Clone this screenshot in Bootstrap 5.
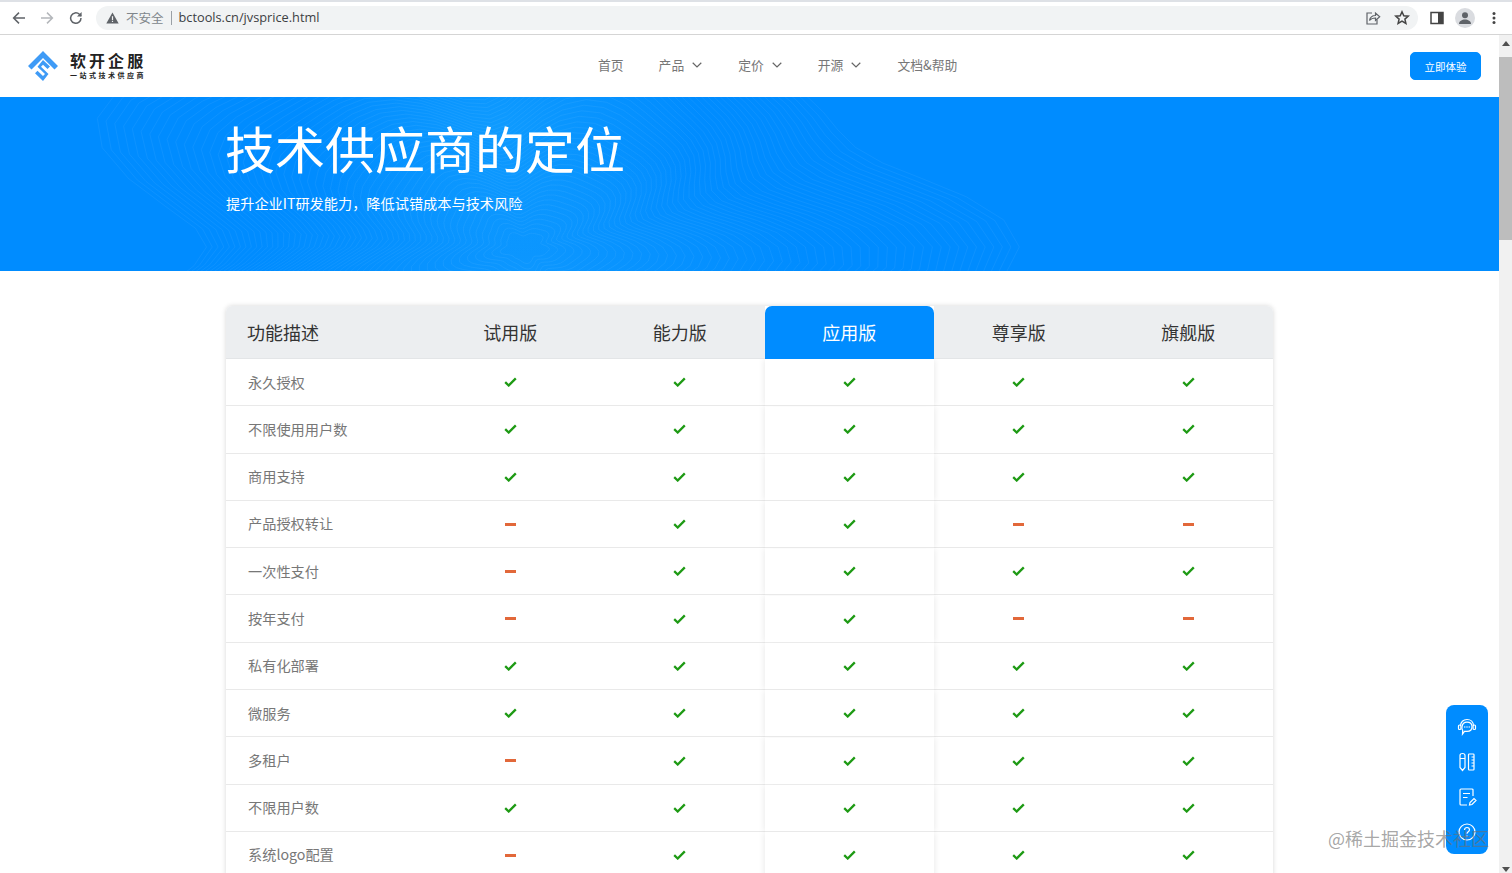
<!DOCTYPE html>
<html lang="zh-CN">
<head>
<meta charset="utf-8">
<title>技术供应商的定位</title>
<link rel="stylesheet" href="https://cdn.jsdelivr.net/npm/bootstrap@5.3.0/dist/css/bootstrap.min.css">
<style>
html,body{height:873px;overflow:hidden;margin:0}
body{font-family:"Noto Sans CJK SC","Noto Sans",sans-serif;background:#fff;color:#333;position:relative}
.tool-bar{height:35px;background:#fff;border-top:2px solid #dee1e6;border-bottom:1px solid #d5d5d5;padding-left:11px}
.tool-ico{width:16px;height:16px;flex:none;color:#5f6368}
.gap-fwd{margin-left:12px}
.gap-reload{margin-left:13px}
.omni{width:1322px;height:24px;margin-left:12px;background:#f1f3f4;border-radius:12px;padding:0 8px 0 10px;font-size:12.5px;flex:none}
.omni-warn{color:#80868b;margin-left:7px}
.omni-sep{width:1px;height:14px;background:#9aa0a6;margin:0 7px}
.omni-url{font-family:"Open Sans",sans-serif;font-size:12.75px;color:#3c4043}
.omni-end{gap:13px}
.side-ico{margin-left:11px}
.avatar{width:20px;height:20px;border-radius:50%;background:#dadce0;margin:0 11px 0 10px;flex:none}
.page-row{height:838px}
.page-main{width:1499px;overflow:hidden;flex:none}
.scroll-track{width:13px;background:#f1f1f1;position:relative}
.scroll-thumb{height:183px;background:#bdbdbd;margin-top:22px}
.arrow-up,.arrow-down{position:absolute;left:3px;width:0;height:0;border-left:4px solid transparent;border-right:4px solid transparent}
.arrow-up{top:6px;border-bottom:5px solid #505050}
.arrow-down{bottom:1px;border-top:5px solid #505050}
.top-nav{height:62px;padding:0 18px 0 28px!important;background:#fff}
.brand-box{width:570px;gap:12px;flex:none}
.brand-text{margin-top:-2px}
.brand-name{font-size:16px;font-weight:700;letter-spacing:3.05px;line-height:19px;color:#222}
.brand-sub{font-size:7px;font-weight:700;letter-spacing:2.5px;line-height:10px;color:#222;white-space:nowrap}
.menu-list{gap:36px;font-size:12.8px;color:#777;margin-top:-2px}
.menu-list span{color:#777}
.menu-first{margin-right:-1px}
.menu-drop{gap:8px}
.try-btn{width:71px;height:28px;padding:0;font-size:10.5px;line-height:28px;border-radius:5px;background:#008cff;border-color:#008cff;color:#fff}
.hero-band{height:174px;padding:11px 0 0 225px;color:#fff;position:relative;overflow:hidden;background:
 radial-gradient(ellipse 200px 130px at 500px 30px,rgba(50,190,255,.30),transparent 100%),
 radial-gradient(ellipse 280px 130px at 530px 175px,rgba(50,185,255,.26),transparent 100%),
 #008cff}
.hero-lines{position:absolute;left:0;top:0;width:1499px;height:174px;pointer-events:none}
.hero-title{font-size:50px;font-weight:400;line-height:78px;margin:0;white-space:nowrap;position:relative}
.hero-sub{font-size:14.2px;line-height:22px;margin:6px 0 0 1px;white-space:nowrap;position:relative}
.price-wrap{padding:35px 0 0 226px}
.price-table{width:1047px;border-radius:6px;box-shadow:0 0 5px rgba(0,0,0,.16);background:#fff}
.price-table table{table-layout:fixed;margin:0;border-collapse:separate;border-spacing:0;width:1047px}
.price-table th{height:53px;background:#eceef0;font-size:18px;font-weight:400;color:#333;vertical-align:middle;text-align:center;padding:0;border-bottom:1px solid #e3e5e7}
.price-table td{height:47.3px;padding:0;font-size:14.2px;color:#777;vertical-align:middle;text-align:center;border-bottom:1px solid #e9e9e9}
.price-table th:first-child{width:199.5px;text-align:left;padding-left:21px;border-top-left-radius:6px}
.price-table th:last-child{border-top-right-radius:6px}
.price-table td:first-child{text-align:left;padding-left:22px}
.price-table th.col-hot{background:#008cff;color:#fff;border-radius:7px 7px 0 0;border-bottom-color:#008cff}
.price-table td.col-hot{box-shadow:0 0 7px rgba(0,0,0,.10);clip-path:inset(0 -10px)}
.mk{display:block;margin:0 auto}
.float-bar{position:absolute;left:1446px;top:705px;width:42px;height:149px;background:#008cff;border-radius:8px;padding:12px 0;gap:15px}
.float-ico{width:20px;height:20px;display:block}
.water-mark{position:absolute;left:1328px;top:825px;font-size:18px;line-height:26px;color:rgba(110,110,110,.62);white-space:nowrap}
</style>
</head>
<body>
<svg width="0" height="0" class="position-absolute">
  <symbol id="ok" viewBox="0 0 13 10"><path d="M1.2 5.2 4.7 8.5 11.8 1.4" fill="none" stroke="#1e9a14" stroke-width="2.3"/></symbol>
  <symbol id="no" viewBox="0 0 11 3"><rect width="11" height="3" fill="#e2683a"/></symbol>
  <symbol id="chev" viewBox="0 0 10 6"><path d="M.7.8 5 5 9.3.8" fill="none" stroke="#666" stroke-width="1.2"/></symbol>
</svg>

<div class="tool-bar d-flex align-items-center">
  <svg class="tool-ico" viewBox="0 0 16 16"><path d="M14 8H3M8 2.6 2.6 8 8 13.4" fill="none" stroke="currentColor" stroke-width="1.5"/></svg>
  <svg class="tool-ico gap-fwd" viewBox="0 0 16 16"><path d="M2 8h11M8 2.6 13.4 8 8 13.4" fill="none" stroke="#b4b7bb" stroke-width="1.5"/></svg>
  <svg class="tool-ico gap-reload" viewBox="0 0 16 16"><path d="M13 8a5.2 5.2 0 1 1-1.6-3.7L13 6" fill="none" stroke="currentColor" stroke-width="1.5"/><path d="M13.6 2v4.6H9z" fill="currentColor"/></svg>
  <div class="omni d-flex align-items-center">
    <svg width="13" height="12" viewBox="0 0 13 12"><path d="M6.5.6 12.7 11.4H.3z" fill="#5f6368"/><rect x="5.9" y="4.2" width="1.2" height="3.8" fill="#f1f3f4"/><rect x="5.9" y="8.8" width="1.2" height="1.2" fill="#f1f3f4"/></svg>
    <span class="omni-warn">不安全</span>
    <span class="omni-sep"></span>
    <span class="omni-url">bctools.cn/jvsprice.html</span>
    <div class="omni-end ms-auto d-flex align-items-center">
      <svg class="tool-ico" viewBox="0 0 16 16"><path d="M7 3H2v11h10V9.500" fill="none" stroke="currentColor" stroke-width="1.2"/><path d="M4.500 10.500c.6-3.500 3-5 6-5V3l4.200 3.800-4.200 3.700V8c-2.500 0-4.500.6-6 2.500z" fill="none" stroke="currentColor" stroke-width="1.2"/></svg>
      <svg class="tool-ico" viewBox="0 0 16 16"><path d="m8 1.800 1.800 4 4.400.4-3.300 2.900 1 4.300L8 11.100l-3.900 2.300 1-4.300-3.300-2.900 4.400-.4z" fill="none" stroke="#444" stroke-width="1.500"/></svg>
    </div>
  </div>
  <svg class="tool-ico side-ico" viewBox="0 0 16 16"><path d="M2 2.500h12v11H2z" fill="none" stroke="#444" stroke-width="1.500"/><rect x="9" y="2.500" width="5" height="11" fill="#444"/></svg>
  <div class="avatar d-flex align-items-center justify-content-center"><svg width="14" height="14" viewBox="0 0 14 14"><circle cx="7" cy="4.200" r="3" fill="#5f6368"/><path d="M1 13c0-3 3-4.500 6-4.500s6 1.500 6 4.500z" fill="#5f6368"/></svg></div>
  <svg class="tool-ico" viewBox="0 0 16 16"><circle cx="8" cy="3.500" r="1.500" fill="#444"/><circle cx="8" cy="8" r="1.500" fill="#444"/><circle cx="8" cy="12.500" r="1.500" fill="#444"/></svg>
</div>

<div class="page-row d-flex">
  <div class="page-main">
    <nav class="navbar top-nav flex-nowrap justify-content-start">
      <div class="brand-box d-flex align-items-center">
        <svg width="30" height="30" viewBox="0 0 30 30">
          <path d="M15 0 30 15l-3.500 3.500L15 7 3.500 18.500 0 15z" fill="#3f9bf6"/>
          <path d="M15 9 22 15.500l-2.500 2.500-4.500-4.300-2 2 7.500 7.300L15 30l-8-7.700 2.500-2.500 5.500 5.200 2-2-7.500-7.300z" fill="#3f9bf6"/>
        </svg>
        <div class="brand-text">
          <div class="brand-name">软开企服</div>
          <div class="brand-sub">一站式技术供应商</div>
        </div>
      </div>
      <div class="menu-list d-flex align-items-center">
        <span class="menu-first">首页</span>
        <div class="menu-drop d-flex align-items-center"><span>产品</span><svg width="10" height="6"><use href="#chev"/></svg></div>
        <div class="menu-drop d-flex align-items-center"><span>定价</span><svg width="10" height="6"><use href="#chev"/></svg></div>
        <div class="menu-drop d-flex align-items-center"><span>开源</span><svg width="10" height="6"><use href="#chev"/></svg></div>
        <span>文档&amp;帮助</span>
      </div>
      <button type="button" class="btn try-btn ms-auto">立即体验</button>
    </nav>

    <section class="hero-band">
      <svg class="hero-lines" id="heroLines" viewBox="0 0 1499 174" fill="none" stroke="#fff" stroke-opacity=".055" stroke-width="1"></svg>
      <h1 class="hero-title">技术供应商的定位</h1>
      <p class="hero-sub">提升企业IT研发能力，降低试错成本与技术风险</p>
    </section>

    <div class="price-wrap">
      <div class="price-table">
        <table class="table">
          <thead><tr><th>功能描述</th><th>试用版</th><th>能力版</th><th class="col-hot">应用版</th><th>尊享版</th><th>旗舰版</th></tr></thead>
          <tbody>
            <tr><td>永久授权</td><td><svg class="mk" width="13" height="10"><use href="#ok"/></svg></td><td><svg class="mk" width="13" height="10"><use href="#ok"/></svg></td><td class="col-hot"><svg class="mk" width="13" height="10"><use href="#ok"/></svg></td><td><svg class="mk" width="13" height="10"><use href="#ok"/></svg></td><td><svg class="mk" width="13" height="10"><use href="#ok"/></svg></td></tr>
            <tr><td>不限使用用户数</td><td><svg class="mk" width="13" height="10"><use href="#ok"/></svg></td><td><svg class="mk" width="13" height="10"><use href="#ok"/></svg></td><td class="col-hot"><svg class="mk" width="13" height="10"><use href="#ok"/></svg></td><td><svg class="mk" width="13" height="10"><use href="#ok"/></svg></td><td><svg class="mk" width="13" height="10"><use href="#ok"/></svg></td></tr>
            <tr><td>商用支持</td><td><svg class="mk" width="13" height="10"><use href="#ok"/></svg></td><td><svg class="mk" width="13" height="10"><use href="#ok"/></svg></td><td class="col-hot"><svg class="mk" width="13" height="10"><use href="#ok"/></svg></td><td><svg class="mk" width="13" height="10"><use href="#ok"/></svg></td><td><svg class="mk" width="13" height="10"><use href="#ok"/></svg></td></tr>
            <tr><td>产品授权转让</td><td><svg class="mk" width="11" height="3"><use href="#no"/></svg></td><td><svg class="mk" width="13" height="10"><use href="#ok"/></svg></td><td class="col-hot"><svg class="mk" width="13" height="10"><use href="#ok"/></svg></td><td><svg class="mk" width="11" height="3"><use href="#no"/></svg></td><td><svg class="mk" width="11" height="3"><use href="#no"/></svg></td></tr>
            <tr><td>一次性支付</td><td><svg class="mk" width="11" height="3"><use href="#no"/></svg></td><td><svg class="mk" width="13" height="10"><use href="#ok"/></svg></td><td class="col-hot"><svg class="mk" width="13" height="10"><use href="#ok"/></svg></td><td><svg class="mk" width="13" height="10"><use href="#ok"/></svg></td><td><svg class="mk" width="13" height="10"><use href="#ok"/></svg></td></tr>
            <tr><td>按年支付</td><td><svg class="mk" width="11" height="3"><use href="#no"/></svg></td><td><svg class="mk" width="13" height="10"><use href="#ok"/></svg></td><td class="col-hot"><svg class="mk" width="13" height="10"><use href="#ok"/></svg></td><td><svg class="mk" width="11" height="3"><use href="#no"/></svg></td><td><svg class="mk" width="11" height="3"><use href="#no"/></svg></td></tr>
            <tr><td>私有化部署</td><td><svg class="mk" width="13" height="10"><use href="#ok"/></svg></td><td><svg class="mk" width="13" height="10"><use href="#ok"/></svg></td><td class="col-hot"><svg class="mk" width="13" height="10"><use href="#ok"/></svg></td><td><svg class="mk" width="13" height="10"><use href="#ok"/></svg></td><td><svg class="mk" width="13" height="10"><use href="#ok"/></svg></td></tr>
            <tr><td>微服务</td><td><svg class="mk" width="13" height="10"><use href="#ok"/></svg></td><td><svg class="mk" width="13" height="10"><use href="#ok"/></svg></td><td class="col-hot"><svg class="mk" width="13" height="10"><use href="#ok"/></svg></td><td><svg class="mk" width="13" height="10"><use href="#ok"/></svg></td><td><svg class="mk" width="13" height="10"><use href="#ok"/></svg></td></tr>
            <tr><td>多租户</td><td><svg class="mk" width="11" height="3"><use href="#no"/></svg></td><td><svg class="mk" width="13" height="10"><use href="#ok"/></svg></td><td class="col-hot"><svg class="mk" width="13" height="10"><use href="#ok"/></svg></td><td><svg class="mk" width="13" height="10"><use href="#ok"/></svg></td><td><svg class="mk" width="13" height="10"><use href="#ok"/></svg></td></tr>
            <tr><td>不限用户数</td><td><svg class="mk" width="13" height="10"><use href="#ok"/></svg></td><td><svg class="mk" width="13" height="10"><use href="#ok"/></svg></td><td class="col-hot"><svg class="mk" width="13" height="10"><use href="#ok"/></svg></td><td><svg class="mk" width="13" height="10"><use href="#ok"/></svg></td><td><svg class="mk" width="13" height="10"><use href="#ok"/></svg></td></tr>
            <tr><td>系统logo配置</td><td><svg class="mk" width="11" height="3"><use href="#no"/></svg></td><td><svg class="mk" width="13" height="10"><use href="#ok"/></svg></td><td class="col-hot"><svg class="mk" width="13" height="10"><use href="#ok"/></svg></td><td><svg class="mk" width="13" height="10"><use href="#ok"/></svg></td><td><svg class="mk" width="13" height="10"><use href="#ok"/></svg></td></tr>
          </tbody>
        </table>
      </div>
    </div>
  </div>
  <div class="scroll-track flex-grow-1">
    <div class="arrow-up"></div>
    <div class="scroll-thumb"></div>
    <div class="arrow-down"></div>
  </div>
</div>

<div class="float-bar d-flex flex-column align-items-center">
  <svg class="float-ico" viewBox="0 0 20 20" fill="none" stroke="#fff" stroke-width="1.200"><path d="M3.500 9C3.500 5 6.300 2.500 10 2.500S16.500 5 16.500 9"/><rect x="1.500" y="8" width="2.400" height="4.500" rx="1"/><rect x="16.100" y="8" width="2.400" height="4.500" rx="1"/><path d="M10 5.200c3 0 5 2 5 4.600S13 14.400 10 14.400H7.500L5.500 17l.2-3.700C4.800 12.400 4.800 11 5 9.800 5.400 7.200 7 5.200 10 5.200z"/><path d="M7.300 10h1M9.500 10h1M11.700 10h1" stroke-width="1.300"/></svg>
  <svg class="float-ico" viewBox="0 0 20 20" fill="none" stroke="#fff" stroke-width="1.200"><path d="M3 3.500a2.500 2 0 0 1 5 0v12l-2.500 3L3 15.500zM3 6.500h5"/><rect x="11.500" y="2" width="5.500" height="16" rx=".8"/><path d="M14.500 5H17M14.500 8H17M14.500 11H17M14.500 14H17"/></svg>
  <svg class="float-ico" viewBox="0 0 20 20" fill="none" stroke="#fff" stroke-width="1.200"><path d="M16 9V3a1 1 0 0 0-1-1H4a1 1 0 0 0-1 1v14a1 1 0 0 0 1 1h6"/><path d="M6 6.500h7M6 10.500h4.500"/><path d="m12.500 18 .5-2.500 4-4 2 2-4 4z"/></svg>
  <svg class="float-ico" viewBox="0 0 20 20" fill="none" stroke="#fff" stroke-width="1.200"><circle cx="10" cy="10" r="8"/><path d="M7.500 8c0-1.500 1.200-2.500 2.500-2.500s2.500 1 2.500 2.300c0 2-2.500 2-2.500 4"/><path d="M10 13.500v1.200"/></svg>
</div>
<div class="water-mark">@稀土掘金技术社区</div>

<script>
(function(){
  var svg=document.getElementById('heroLines'),d='';
  for(var k=3;k<58;k++){
    var r=k*4.6,p=[];
    for(var i=0;i<=72;i++){
      var t=i/72*Math.PI*2;
      var m=1+.16*Math.sin(5*t+k*.03)+.06*Math.sin(9*t+1.3);
      p.push((525+Math.cos(t)*r*m*1.55).toFixed(1)+' '+(150+Math.sin(t)*r*m).toFixed(1));
    }
    d+='M'+p.join('L')+'Z';
  }
  var e=document.createElementNS('http://www.w3.org/2000/svg','path');
  e.setAttribute('d',d);svg.appendChild(e);
})();
</script>
<script src="https://cdn.jsdelivr.net/npm/bootstrap@5.3.0/dist/js/bootstrap.bundle.min.js"></script>
</body>
</html>
